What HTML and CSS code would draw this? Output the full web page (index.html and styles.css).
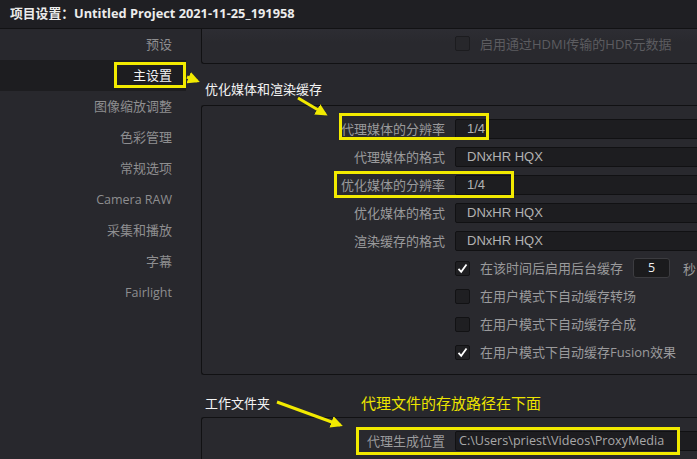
FILE: index.html
```html
<!DOCTYPE html>
<html lang="zh-CN">
<head>
<meta charset="utf-8">
<title>项目设置</title>
<link rel="stylesheet" href="styles.css">
</head>
<body>
<div class="window">
  <header class="titlebar">项目设置：Untitled Project 2021-11-25_191958</header>
  <div class="main">
    <nav class="sidebar">
      <div class="nav-item">预设</div>
      <div class="nav-item active">主设置</div>
      <div class="nav-item">图像缩放调整</div>
      <div class="nav-item">色彩管理</div>
      <div class="nav-item">常规选项</div>
      <div class="nav-item latin">Camera RAW</div>
      <div class="nav-item">采集和播放</div>
      <div class="nav-item">字幕</div>
      <div class="nav-item latin">Fairlight</div>
    </nav>
    <div class="content">
      <section class="panel panel-top">
        <div class="check-row disabled"><span class="box"></span><span class="check-label">启用通过HDMI传输的HDR元数据</span></div>
      </section>
      <h3 class="section-title">优化媒体和渲染缓存</h3>
      <section class="panel panel-cache">
        <div class="field-row"><label>代理媒体的分辨率</label><div class="field">1/4</div></div>
        <div class="field-row"><label>代理媒体的格式</label><div class="field">DNxHR HQX</div></div>
        <div class="field-row"><label>优化媒体的分辨率</label><div class="field">1/4</div></div>
        <div class="field-row"><label>优化媒体的格式</label><div class="field">DNxHR HQX</div></div>
        <div class="field-row"><label>渲染缓存的格式</label><div class="field">DNxHR HQX</div></div>
        <div class="checks">
          <div class="check-row"><span class="box checked"><svg viewBox="0 0 15 15" width="15" height="15"><path d="M3.5 7.8 L6.2 10.8 L11.5 3.5" fill="none" stroke="#fff" stroke-width="1.8"/></svg></span><span class="check-label">在该时间后启用后台缓存</span><span class="num">5</span><span class="unit">秒</span></div>
          <div class="check-row"><span class="box"></span><span class="check-label">在用户模式下自动缓存转场</span></div>
          <div class="check-row"><span class="box"></span><span class="check-label">在用户模式下自动缓存合成</span></div>
          <div class="check-row"><span class="box checked"><svg viewBox="0 0 15 15" width="15" height="15"><path d="M3.5 7.8 L6.2 10.8 L11.5 3.5" fill="none" stroke="#fff" stroke-width="1.8"/></svg></span><span class="check-label">在用户模式下自动缓存Fusion效果</span></div>
        </div>
      </section>
      <h3 class="section-title second">工作文件夹</h3>
      <section class="panel panel-folder">
        <div class="field-row"><label>代理生成位置</label><div class="field path">C:\Users\priest\Videos\ProxyMedia</div></div>
      </section>
    </div>
  </div>

  <div class="mark mark-main"></div>
  <div class="mark mark-proxy"></div>
  <div class="mark mark-opt"></div>
  <div class="mark mark-path"></div>
  <div class="note">代理文件的存放路径在下面</div>
  <svg class="arrows" width="697" height="459" viewBox="0 0 697 459">
    <defs>
      <marker id="ah" markerWidth="4" markerHeight="4" refX="3" refY="2" orient="auto" markerUnits="strokeWidth">
        <path d="M0 0 L4 2 L0 4 Z" fill="#f2ea00"/>
      </marker>
    </defs>
    <line x1="187" y1="77" x2="197" y2="81" stroke="#f2ea00" stroke-width="3" marker-end="url(#ah)"/>
    <line x1="298" y1="98" x2="325" y2="114" stroke="#f2ea00" stroke-width="3" marker-end="url(#ah)"/>
    <line x1="277" y1="402" x2="340" y2="425" stroke="#f2ea00" stroke-width="3" marker-end="url(#ah)"/>
  </svg>
</div>
</body>
</html>
```

FILE: styles.css
```css
* { box-sizing: border-box; }
html, body { margin: 0; padding: 0; background: #28282d; }
body {
  font-family: "Open Sans", "Noto Sans CJK SC", sans-serif;
  font-size: 13px;
  color: #9a9a9a;
}
.window {
  position: relative;
  width: 697px;
  height: 459px;
  overflow: hidden;
  background: #28282d;
}
.titlebar {
  height: 29px;
  background: #1f1f23;
  border-bottom: 1px solid #121214;
  color: #ececec;
  font-weight: 700;
  font-size: 12.8px;
  line-height: 27px;
  padding-left: 10px;
  white-space: nowrap;
}
.main {
  display: flex;
  align-items: flex-start;
}
.sidebar {
  width: 186px;
  flex: none;
}
.nav-item {
  height: 31px;
  line-height: 31px;
  text-align: right;
  padding-right: 14px;
  color: #8e8e90;
  font-size: 13px;
  white-space: nowrap;
}
.nav-item.latin { font-size: 12.5px; }
.nav-item.active {
  background: #1d1d20;
  color: #f2f2f2;
}
.content {
  margin-left: 15px;
  width: 570px;
  flex: none;
}
.panel {
  border: 1px solid #111113;
  border-right: none;
  border-radius: 3px 0 0 3px;
  background: #29292e;
}
.panel-top {
  border-top: none;
  border-radius: 0 0 0 3px;
  height: 35px;
  padding-top: 7px;
  background: linear-gradient(#2d2d33, #29292e 40%);
}
.section-title {
  margin: 0;
  height: 41px;
  padding: 17px 0 0 4px;
  font-size: 13px;
  line-height: 16px;
  font-weight: 400;
  color: #f4f4f4;
  white-space: nowrap;
}
.section-title.second {
  height: 42px;
  padding-top: 20px;
}
.panel-cache {
  height: 270px;
  padding-top: 13px;
}
.panel-folder {
  height: 60px;
  padding-top: 13px;
}
.field-row {
  display: grid;
  grid-template-columns: 243px 1fr;
  column-gap: 10px;
  align-items: center;
  height: 20px;
  margin-bottom: 8px;
}
.field-row label {
  text-align: right;
  color: #9a9a9c;
  white-space: nowrap;
  line-height: 20px;
}
.field {
  height: 20px;
  background: #1d1d20;
  border: 1px solid #111113;
  border-radius: 2px;
  color: #b2b2b2;
  font-family: "Liberation Sans", "Noto Sans CJK SC", sans-serif;
  font-size: 13px;
  line-height: 18px;
  padding-left: 11px;
  white-space: nowrap;
}
.field.path {
  padding-left: 3px;
  font-family: "Open Sans", sans-serif;
  font-size: 12.6px;
  color: #a8a8a8;
}
.checks {
  margin-top: -5px;
  padding-left: 253px;
}
.check-row {
  display: flex;
  align-items: center;
  height: 28px;
  white-space: nowrap;
}
.panel-top .check-row {
  padding-left: 253px;
  height: 15px;
}
.box {
  width: 15px;
  height: 15px;
  flex: none;
  border: 1px solid #121214;
  border-radius: 2px;
  background: #1f1f22;
  display: flex;
}
.box svg { display: block; margin: -1px; }
.check-label {
  margin-left: 10px;
  color: #9a9a9c;
  line-height: 16px;
}
.disabled .box { background: #27272b; border-color: #1c1c1f; }
.disabled .check-label { color: #5c5c60; }
.num {
  margin-left: 10px;
  width: 37px;
  height: 20px;
  border: 1px solid #3c3c40;
  border-radius: 3px;
  background: #1b1b1d;
  color: #f0f0f0;
  text-align: center;
  line-height: 18px;
  font-size: 12.5px;
}
.unit {
  margin-left: 13px;
  color: #9a9a9c;
}
.mark {
  position: absolute;
  border: 3px solid #f2ea00;
}
.mark-main { left: 114px; top: 62px; width: 72px; height: 26px; }
.mark-proxy { left: 339px; top: 113px; width: 150px; height: 27px; }
.mark-opt { left: 334px; top: 171px; width: 180px; height: 27px; }
.mark-path { left: 356px; top: 427px; width: 324px; height: 28px; }
.note {
  position: absolute;
  left: 361px;
  top: 393px;
  font-size: 15px;
  line-height: 20px;
  color: #ece400;
  white-space: nowrap;
}
.arrows {
  position: absolute;
  left: 0;
  top: 0;
  pointer-events: none;
}
```
